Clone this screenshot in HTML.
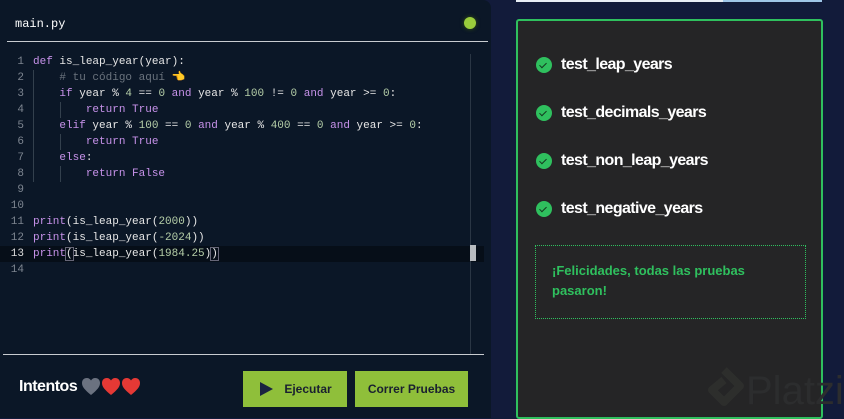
<!DOCTYPE html>
<html><head><meta charset="utf-8"><style>
*{margin:0;padding:0;box-sizing:border-box}
body{width:844px;height:418px;background:#121b3a;position:relative;overflow:hidden;font-family:"Liberation Sans",sans-serif}
#left{position:absolute;left:0;top:0;width:491px;height:418px;background:#0b1727;border-radius:0 8px 0 0}
.title{position:absolute;left:15px;top:17px;color:#fff;font:12px "Liberation Mono",monospace}
.dot{position:absolute;left:464px;top:17px;width:12px;height:12px;border-radius:50%;background:#9acd3c;box-shadow:0 0 4px #3a5a10}
.sep{position:absolute;left:7px;height:1px;background:#c8ccd0;width:481px}
.code{position:absolute;left:0;top:54px;font:11px/16px "Liberation Mono",monospace;color:#e6e6e6;white-space:pre}
.ln{display:inline-block;width:24px;text-align:right;color:#7d8590;margin-right:9px}
.k{color:#c792ea}.n{color:#b5cea8}.c{color:#6a737d}
.hl{position:absolute;left:0;top:246px;width:484px;height:16px;background:#060e18}
.vs{position:absolute;left:470px;top:54px;width:1px;height:300px;background:#2a3644}
.guide{position:absolute;width:1px;background:#33404d}
.btn{position:absolute;top:371px;height:36px;background:#8fbf3a;color:#1a2030;font:bold 12px "Liberation Sans",sans-serif;display:flex;align-items:center;justify-content:center}
#card{position:absolute;left:516px;top:19px;width:307px;height:400px;background:#252526;border:2px solid #2fc05e;border-radius:3px}
.t{position:absolute;left:18px;color:#fff;font:bold 16px "Liberation Sans",sans-serif;letter-spacing:-0.6px;display:flex;align-items:center}
.chk{width:16px;height:16px;border-radius:50%;background:#2fc05e;margin-right:9px;position:relative}
.chk:after{content:"";position:absolute;left:5px;top:4px;width:3px;height:6px;border:solid #153a20;border-width:0 1.5px 1.5px 0;transform:rotate(45deg)}
.msg{position:absolute;left:17px;top:224px;width:271px;height:74px;border:1px dotted #2fc05e;color:#2fc05e;font:bold 13px/20px "Liberation Sans",sans-serif;padding:15px 16px}
</style></head><body>
<div style="position:absolute;left:516px;top:0;width:207px;height:2px;background:#e8eef5"></div>
<div style="position:absolute;left:723px;top:0;width:99px;height:2px;background:#9fc6e8"></div>
<div id="left">
<div class="title">main.py</div>
<div class="dot"></div>
<div class="sep" style="top:41px"></div>
<div class="hl"></div>
<div class="vs"></div>
<div class="guide" style="left:33px;top:70px;height:112px"></div>
<div class="guide" style="left:60px;top:102px;height:16px"></div>
<div class="guide" style="left:60px;top:134px;height:16px"></div>
<div class="guide" style="left:60px;top:166px;height:16px"></div>
<div style="position:absolute;left:470px;top:245px;width:6px;height:16px;background:#b8bcc0"></div>
<div class="code"><span class="ln">1</span><span class="k">def</span> is_leap_year(year):
<span class="ln">2</span>    <span class="c"># tu código aquí</span> <span style="color:#f0b030">👈</span>
<span class="ln">3</span>    <span class="k">if</span> year % <span class="n">4</span> == <span class="n">0</span> <span class="k">and</span> year % <span class="n">100</span> != <span class="n">0</span> <span class="k">and</span> year &gt;= <span class="n">0</span>:
<span class="ln">4</span>        <span class="k">return</span> <span class="k">True</span>
<span class="ln">5</span>    <span class="k">elif</span> year % <span class="n">100</span> == <span class="n">0</span> <span class="k">and</span> year % <span class="n">400</span> == <span class="n">0</span> <span class="k">and</span> year &gt;= <span class="n">0</span>:
<span class="ln">6</span>        <span class="k">return</span> <span class="k">True</span>
<span class="ln">7</span>    <span class="k">else</span>:
<span class="ln">8</span>        <span class="k">return</span> <span class="k">False</span>
<span class="ln">9</span>
<span class="ln">10</span>
<span class="ln">11</span><span class="k">print</span>(is_leap_year(<span class="n">2000</span>))
<span class="ln">12</span><span class="k">print</span>(is_leap_year(<span class="n">-2024</span>))
<span class="ln" style="color:#ddd">13</span><span class="k">print</span><span style="outline:1px solid #667">(</span>is_leap_year(<span class="n">1984.25</span>)<span style="outline:1px solid #667">)</span>
<span class="ln">14</span></div>
<div class="sep" style="top:354px;left:3px;width:481px"></div>
<div style="position:absolute;left:19px;top:378px;color:#fff;font:bold 16px 'Liberation Sans',sans-serif;letter-spacing:-0.5px;display:flex;align-items:center">Intentos
<svg width="62" height="18" viewBox="0 0 62 18" style="margin-left:5px"><g><path id="h" d="M9 17C3 12 0 9 0 5C0 2 2 0 4.8 0C6.8 0 8.2 1 9 2.5C9.8 1 11.2 0 13.2 0C16 0 18 2 18 5C18 9 15 12 9 17Z" fill="#6b7280"/><path d="M29 17C23 12 20 9 20 5C20 2 22 0 24.8 0C26.8 0 28.2 1 29 2.5C29.8 1 31.2 0 33.2 0C36 0 38 2 38 5C38 9 35 12 29 17Z" fill="#e53935"/><path d="M49 17C43 12 40 9 40 5C40 2 42 0 44.8 0C46.8 0 48.2 1 49 2.5C49.8 1 51.2 0 53.2 0C56 0 58 2 58 5C58 9 55 12 49 17Z" fill="#e53935"/></g></svg></div>
<div class="btn" style="left:243px;width:104px"><svg width="16" height="16" viewBox="0 0 16 16" style="margin-right:10px"><path d="M2 1L15 8L2 15Z" fill="#1a2340"/></svg>Ejecutar</div>
<div class="btn" style="left:355px;width:113px">Correr Pruebas</div>
</div>
<div id="card">
<div class="t" style="top:35px"><span class="chk"></span>test_leap_years</div>
<div class="t" style="top:83px"><span class="chk"></span>test_decimals_years</div>
<div class="t" style="top:131px"><span class="chk"></span>test_non_leap_years</div>
<div class="t" style="top:179px"><span class="chk"></span>test_negative_years</div>
<div class="msg">¡Felicidades, todas las pruebas pasaron!</div>
<svg width="40" height="44" viewBox="0 0 40 44" style="position:absolute;left:186px;top:345px"><path d="M20 4L36 20L20 36L8 24L20 14" fill="none" stroke="#2d2e2c" stroke-width="8" stroke-linejoin="round"/></svg>
<div style="position:absolute;left:228px;top:348px;color:#2c2d2e;font:40px 'Liberation Sans',sans-serif">Platzi</div>
</div>
</body></html>
